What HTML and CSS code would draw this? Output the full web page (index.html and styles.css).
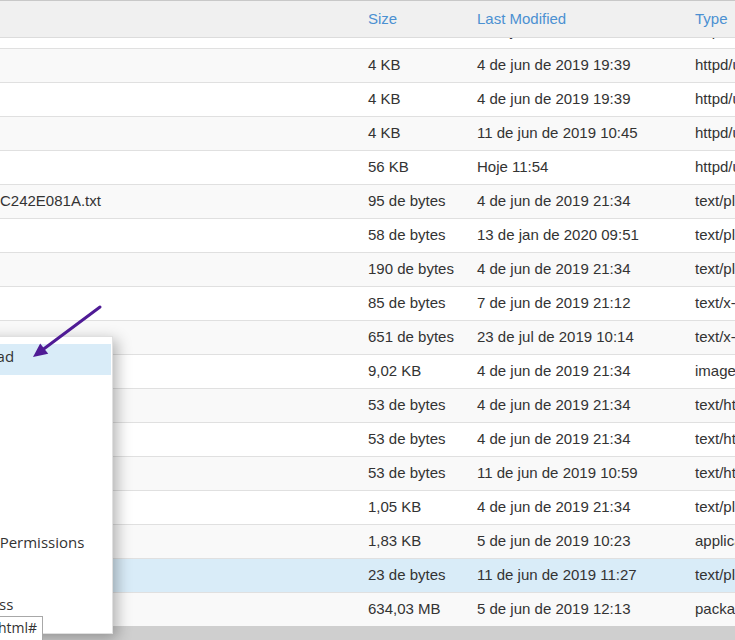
FILE: index.html
```html
<!DOCTYPE html>
<html>
<head>
<meta charset="utf-8">
<link rel="stylesheet" href="styles.css">
</head>
<body>
<div class="page">
  <div class="head row-grid">
    <div class="cell name"></div>
    <div class="cell">Size</div>
    <div class="cell">Last Modified</div>
    <div class="cell">Type</div>
  </div>
  <div class="rows">
    <div class="rows-inner">
      <div class="row row-grid"><div class="cell name"></div><div class="cell">4 KB</div><div class="cell">4 de jun de 2019 19:39</div><div class="cell">httpd/unix-directory</div></div>
      <div class="row row-grid"><div class="cell name"></div><div class="cell">4 KB</div><div class="cell">4 de jun de 2019 19:39</div><div class="cell">httpd/unix-directory</div></div>
      <div class="row row-grid"><div class="cell name"></div><div class="cell">4 KB</div><div class="cell">4 de jun de 2019 19:39</div><div class="cell">httpd/unix-directory</div></div>
      <div class="row row-grid"><div class="cell name"></div><div class="cell">4 KB</div><div class="cell">11 de jun de 2019 10:45</div><div class="cell">httpd/unix-directory</div></div>
      <div class="row row-grid"><div class="cell name"></div><div class="cell">56 KB</div><div class="cell">Hoje 11:54</div><div class="cell">httpd/unix-directory</div></div>
      <div class="row row-grid"><div class="cell name">C242E081A.txt</div><div class="cell">95 de bytes</div><div class="cell">4 de jun de 2019 21:34</div><div class="cell">text/plain</div></div>
      <div class="row row-grid"><div class="cell name"></div><div class="cell">58 de bytes</div><div class="cell">13 de jan de 2020 09:51</div><div class="cell">text/plain</div></div>
      <div class="row row-grid"><div class="cell name"></div><div class="cell">190 de bytes</div><div class="cell">4 de jun de 2019 21:34</div><div class="cell">text/plain</div></div>
      <div class="row row-grid"><div class="cell name"></div><div class="cell">85 de bytes</div><div class="cell">7 de jun de 2019 21:12</div><div class="cell">text/x-php</div></div>
      <div class="row row-grid"><div class="cell name"></div><div class="cell">651 de bytes</div><div class="cell">23 de jul de 2019 10:14</div><div class="cell">text/x-php</div></div>
      <div class="row row-grid"><div class="cell name"></div><div class="cell">9,02 KB</div><div class="cell">4 de jun de 2019 21:34</div><div class="cell">image/png</div></div>
      <div class="row row-grid"><div class="cell name"></div><div class="cell">53 de bytes</div><div class="cell">4 de jun de 2019 21:34</div><div class="cell">text/html</div></div>
      <div class="row row-grid"><div class="cell name"></div><div class="cell">53 de bytes</div><div class="cell">4 de jun de 2019 21:34</div><div class="cell">text/html</div></div>
      <div class="row row-grid"><div class="cell name"></div><div class="cell">53 de bytes</div><div class="cell">11 de jun de 2019 10:59</div><div class="cell">text/html</div></div>
      <div class="row row-grid"><div class="cell name"></div><div class="cell">1,05 KB</div><div class="cell">4 de jun de 2019 21:34</div><div class="cell">text/plain</div></div>
      <div class="row row-grid"><div class="cell name"></div><div class="cell">1,83 KB</div><div class="cell">5 de jun de 2019 10:23</div><div class="cell">application/json</div></div>
      <div class="row row-grid selected"><div class="cell name"></div><div class="cell">23 de bytes</div><div class="cell">11 de jun de 2019 11:27</div><div class="cell">text/plain</div></div>
      <div class="row row-grid"><div class="cell name"></div><div class="cell">634,03 MB</div><div class="cell">5 de jun de 2019 12:13</div><div class="cell">package/x-generic</div></div>
    </div>
  </div>
  <div class="footer-bar"></div>

  <ul class="menu">
    <li class="item active">Download</li>
    <li class="item">View</li>
    <li class="item">Edit</li>
    <li class="item">Move</li>
    <li class="item">Copy</li>
    <li class="item">Open</li>
    <li class="item">Change Permissions</li>
    <li class="item">Delete</li>
    <li class="item">Compress</li>
  </ul>

  <div class="status">index.html#</div>

  <svg class="arrow" width="110" height="65" viewBox="0 0 110 65">
    <line x1="100" y1="7" x2="43" y2="49.5" stroke="#4f1b95" stroke-width="3" stroke-linecap="round"/>
    <polygon points="33,57 40.2,43.6 48.2,53.8" fill="#4f1b95"/>
  </svg>
</div>
</body>
</html>
```

FILE: styles.css
```css
html, body {
  margin: 0;
  padding: 0;
}
body {
  width: 735px;
  height: 640px;
  overflow: hidden;
  background: #fff;
  font-family: "Liberation Sans", Arial, sans-serif;
  font-size: 15px;
  color: #333;
}
.page {
  position: relative;
  width: 735px;
  height: 640px;
  overflow: hidden;
  display: flex;
  flex-direction: column;
}
.row-grid {
  display: grid;
  grid-template-columns: 360px 109px 218px 300px;
  align-items: center;
  white-space: nowrap;
}
.cell {
  padding-left: 8px;
  overflow: hidden;
}
.cell.name {
  padding-left: 0;
}
.head {
  height: 38px;
  box-sizing: border-box;
  flex: none;
  padding-bottom: 2px;
  background: #f0f0f0;
  border-top: 1px solid #c8c8c8;
  border-bottom: 1px solid #dcdcdc;
  color: #4b90d2;
}
.rows {
  flex: none;
  height: 588px;
  overflow: hidden;
}
.rows-inner {
  margin-top: -24px;
}
.row {
  height: 34px;
  box-sizing: border-box;
  padding-bottom: 2px;
  border-top: 1px solid #e0e0e0;
  background: #fff;
}
.row:nth-child(even) {
  background: #f9f9f9;
}
.row.selected {
  background: #d9ecf8;
}
.footer-bar {
  flex: 1;
  background: #cfcfcf;
}
.menu {
  position: absolute;
  left: -90px;
  top: 336px;
  width: 203px;
  margin: 0;
  padding: 7px 0 10px;
  list-style: none;
  background: #fff;
  box-sizing: border-box;
  border: 1px solid rgba(0, 0, 0, 0.12);
  box-shadow: 4px 4px 14px rgba(0, 0, 0, 0.3);
  font-family: "Open Sans", "Noto Sans", sans-serif;
  font-size: 15px;
  color: #333;
}
.item {
  height: 31px;
  line-height: 24px;
  padding-left: 32px;
  white-space: nowrap;
}
.item.active {
  background: #d9ecf8;
  margin-right: 1px;
}
.status {
  position: absolute;
  left: -160px;
  top: 616px;
  width: 203px;
  height: 30px;
  box-sizing: border-box;
  padding-right: 5px;
  text-align: right;
  background: #fff;
  border: 1px solid #a8a8a8;
  font-family: "Open Sans", "Noto Sans", sans-serif;
  font-size: 14px;
  line-height: 22px;
  color: #333;
}
.arrow {
  position: absolute;
  left: 0;
  top: 300px;
}
```
